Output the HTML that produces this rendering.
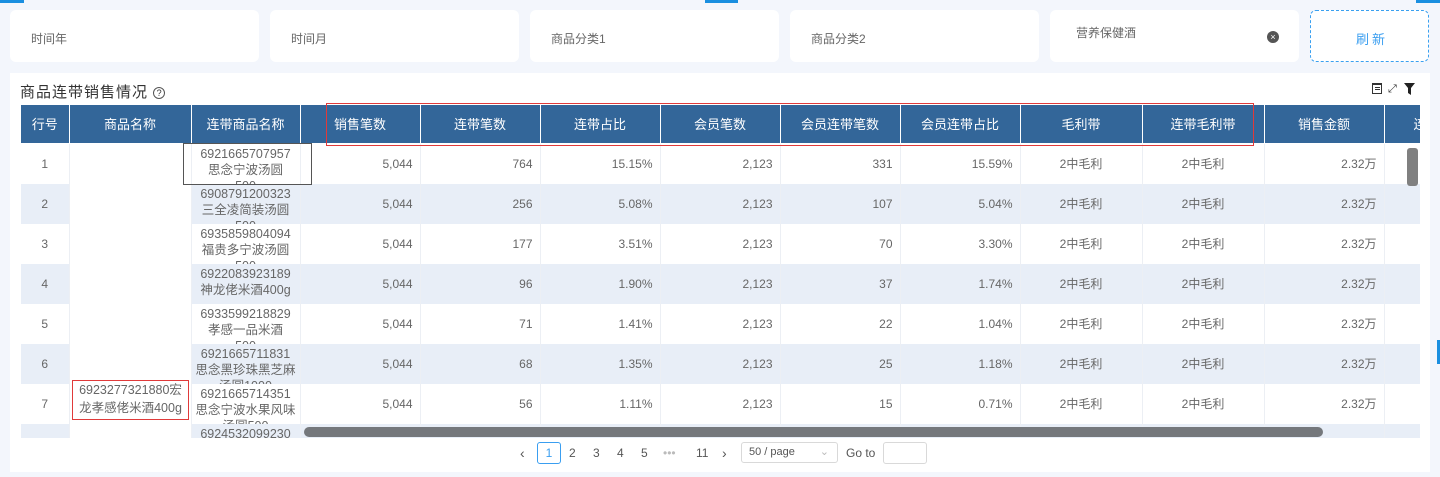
<!DOCTYPE html><html><head><meta charset="utf-8"><style>
*{box-sizing:border-box;margin:0;padding:0}
body{width:1440px;height:477px;background:#f3f6fc;font-family:"Liberation Sans","Noto Sans CJK SC",sans-serif;position:relative;overflow:hidden;color:#666}
.f{position:absolute;top:10px;height:52px;background:#fff;border-radius:6px;font-size:12px;color:#666}
.f span{position:absolute;left:21px;top:20px}
.card{position:absolute;left:10px;top:73px;width:1420px;height:399px;background:#fff}
.wrap{position:absolute;left:21px;top:105px;width:1399px;height:333px;overflow:hidden}
table{border-collapse:collapse;table-layout:fixed;width:1435px}
th{background:#336699;color:#fff;font-size:13px;font-weight:normal;height:38px;border-right:1px solid #fff;border-bottom:1px solid #fff}
td{height:40px;border-right:1px solid #eceff4;font-size:12px;color:#666;vertical-align:middle;padding:0 7px;text-align:right}
tr.s td{background:#e8eef7}
td.c{text-align:center}
td.n{vertical-align:top;text-align:center;padding:2px 0 0;line-height:16px;white-space:nowrap;font-size:12.5px}
td.n div{height:38px;overflow:hidden}
td.m{background:#fff!important}
.bx{position:absolute;border:1px solid}
.pg{position:absolute;top:442px;font-size:12px;color:#555}
</style></head><body>
<div style="position:absolute;left:0;top:0;width:24px;height:3px;background:#1a8fe0"></div>
<div style="position:absolute;left:705px;top:0;width:33px;height:3px;background:#1a8fe0"></div>
<div style="position:absolute;left:1416px;top:0;width:24px;height:3px;background:#1a8fe0"></div>
<div class="f" style="left:10px;width:249px"><span>时间年</span></div>
<div class="f" style="left:270px;width:249px"><span>时间月</span></div>
<div class="f" style="left:530px;width:249px"><span>商品分类1</span></div>
<div class="f" style="left:790px;width:249px"><span>商品分类2</span></div>
<div class="f" style="left:1050px;width:249px"><span style="left:26px;top:14px">营养保健酒</span>
<div style="position:absolute;left:217px;top:21px;width:12px;height:12px;border-radius:50%;background:#555;color:#fff;font-size:9px;line-height:12px;text-align:center">×</div></div>
<div class="f" style="left:1310px;width:119px;border:1px dashed #3aa0f0;color:#3a9ef0;font-size:13px"><span style="left:45px;top:18px;letter-spacing:3px">刷新</span></div>
<div class="card">
<div style="position:absolute;left:10px;top:8px;font-size:15px;color:#333;letter-spacing:1px">商品连带销售情况 <span style="display:inline-block;width:12px;height:12px;border:1px solid #555;border-radius:50%;font-size:9px;line-height:10px;text-align:center;vertical-align:1px;letter-spacing:0">?</span></div>
<div style="position:absolute;left:1362px;top:10px;width:10px;height:11px;border:1.5px solid #333;border-top-width:2px"></div>
<div style="position:absolute;left:1365px;top:14px;width:5px;height:3px;border-top:1px solid #333;border-bottom:1px solid #333"></div>
<div style="position:absolute;left:1378px;top:10px;font-size:11px;color:#333">⤢</div>
<svg style="position:absolute;left:1394px;top:10px" width="11" height="12"><path d="M0 0H11L7 5V12L4 10V5Z" fill="#222"/></svg>
</div>
<div class="wrap"><table>
<colgroup><col style="width:48px"><col style="width:122px"><col style="width:109px"><col style="width:120px"><col style="width:120px"><col style="width:120px"><col style="width:120px"><col style="width:120px"><col style="width:120px"><col style="width:122px"><col style="width:122px"><col style="width:120px"><col style="width:72px"></colgroup>
<tr><th>行号</th><th>商品名称</th><th>连带商品名称</th><th>销售笔数</th><th>连带笔数</th><th>连带占比</th><th>会员笔数</th><th>会员连带笔数</th><th>会员连带占比</th><th>毛利带</th><th>连带毛利带</th><th>销售金额</th><th>连</th></tr>
<tr><td class="c">1</td><td class="m" rowspan="8"></td><td class="n"><div>6921665707957<br>思念宁波汤圆<br>500</div></td><td>5,044</td><td>764</td><td>15.15%</td><td>2,123</td><td>331</td><td>15.59%</td><td class="c">2中毛利</td><td class="c">2中毛利</td><td>2.32万</td><td></td></tr>
<tr class="s"><td class="c">2</td><td class="n"><div>6908791200323<br>三全凌简装汤圆<br>500</div></td><td>5,044</td><td>256</td><td>5.08%</td><td>2,123</td><td>107</td><td>5.04%</td><td class="c">2中毛利</td><td class="c">2中毛利</td><td>2.32万</td><td></td></tr>
<tr><td class="c">3</td><td class="n"><div>6935859804094<br>福贵多宁波汤圆<br>500</div></td><td>5,044</td><td>177</td><td>3.51%</td><td>2,123</td><td>70</td><td>3.30%</td><td class="c">2中毛利</td><td class="c">2中毛利</td><td>2.32万</td><td></td></tr>
<tr class="s"><td class="c">4</td><td class="n"><div>6922083923189<br>神龙佬米酒400g</div></td><td>5,044</td><td>96</td><td>1.90%</td><td>2,123</td><td>37</td><td>1.74%</td><td class="c">2中毛利</td><td class="c">2中毛利</td><td>2.32万</td><td></td></tr>
<tr><td class="c">5</td><td class="n"><div>6933599218829<br>孝感一品米酒<br>500</div></td><td>5,044</td><td>71</td><td>1.41%</td><td>2,123</td><td>22</td><td>1.04%</td><td class="c">2中毛利</td><td class="c">2中毛利</td><td>2.32万</td><td></td></tr>
<tr class="s"><td class="c">6</td><td class="n"><div>6921665711831<br>思念黑珍珠黑芝麻<br>汤圆1000</div></td><td>5,044</td><td>68</td><td>1.35%</td><td>2,123</td><td>25</td><td>1.18%</td><td class="c">2中毛利</td><td class="c">2中毛利</td><td>2.32万</td><td></td></tr>
<tr><td class="c">7</td><td class="n"><div>6921665714351<br>思念宁波水果风味<br>汤圆500</div></td><td>5,044</td><td>56</td><td>1.11%</td><td>2,123</td><td>15</td><td>0.71%</td><td class="c">2中毛利</td><td class="c">2中毛利</td><td>2.32万</td><td></td></tr>
<tr class="s"><td class="c"></td><td class="n"><div>6924532099230</div></td><td></td><td></td><td></td><td></td><td></td><td></td><td></td><td></td><td></td><td></td></tr>
</table></div>
<div style="position:absolute;left:72px;top:381px;width:117px;text-align:center;font-size:12.5px;line-height:18px;color:#666">6923277321880宏<br>龙孝感佬米酒400g</div>
<div style="position:absolute;left:304px;top:427px;width:1019px;height:10px;border-radius:5px;background:#75787c"></div>
<div style="position:absolute;left:1407px;top:148px;width:11px;height:38px;border-radius:3px;background:#808080"></div>
<div class="bx" style="left:326px;top:103px;width:928px;height:43px;border-color:#e03a3a"></div>
<div class="bx" style="left:183px;top:143px;width:129px;height:42px;border-color:#555"></div>
<div class="bx" style="left:72px;top:380px;width:117px;height:40px;border-color:#e03a3a"></div>
<div style="position:absolute;left:1437px;top:340px;width:3px;height:24px;background:#1a8fe0"></div>
<div class="pg" style="left:520px;top:445px;font-size:14px">‹</div>
<div class="pg" style="left:537px;width:24px;height:22px;border:1px solid #3a9ef0;border-radius:3px;text-align:center;line-height:20px;color:#3a9ef0">1</div>
<div class="pg" style="left:569px;top:446px">2</div><div class="pg" style="left:593px;top:446px">3</div><div class="pg" style="left:617px;top:446px">4</div><div class="pg" style="left:641px;top:446px">5</div>
<div class="pg" style="left:663px;top:446px;color:#bbb">•••</div>
<div class="pg" style="left:696px;top:446px">11</div>
<div class="pg" style="left:722px;top:445px;font-size:14px">›</div>
<div class="pg" style="left:741px;width:97px;height:21px;border:1px solid #d9d9d9;border-radius:3px;padding:3px 7px;font-size:11px">50 / page<span style="position:absolute;right:8px;top:2px;color:#bbb">⌄</span></div>
<div class="pg" style="left:846px;top:446px">Go to</div>
<div class="pg" style="left:883px;width:44px;height:22px;border:1px solid #d9d9d9;border-radius:3px"></div>
</body></html>
